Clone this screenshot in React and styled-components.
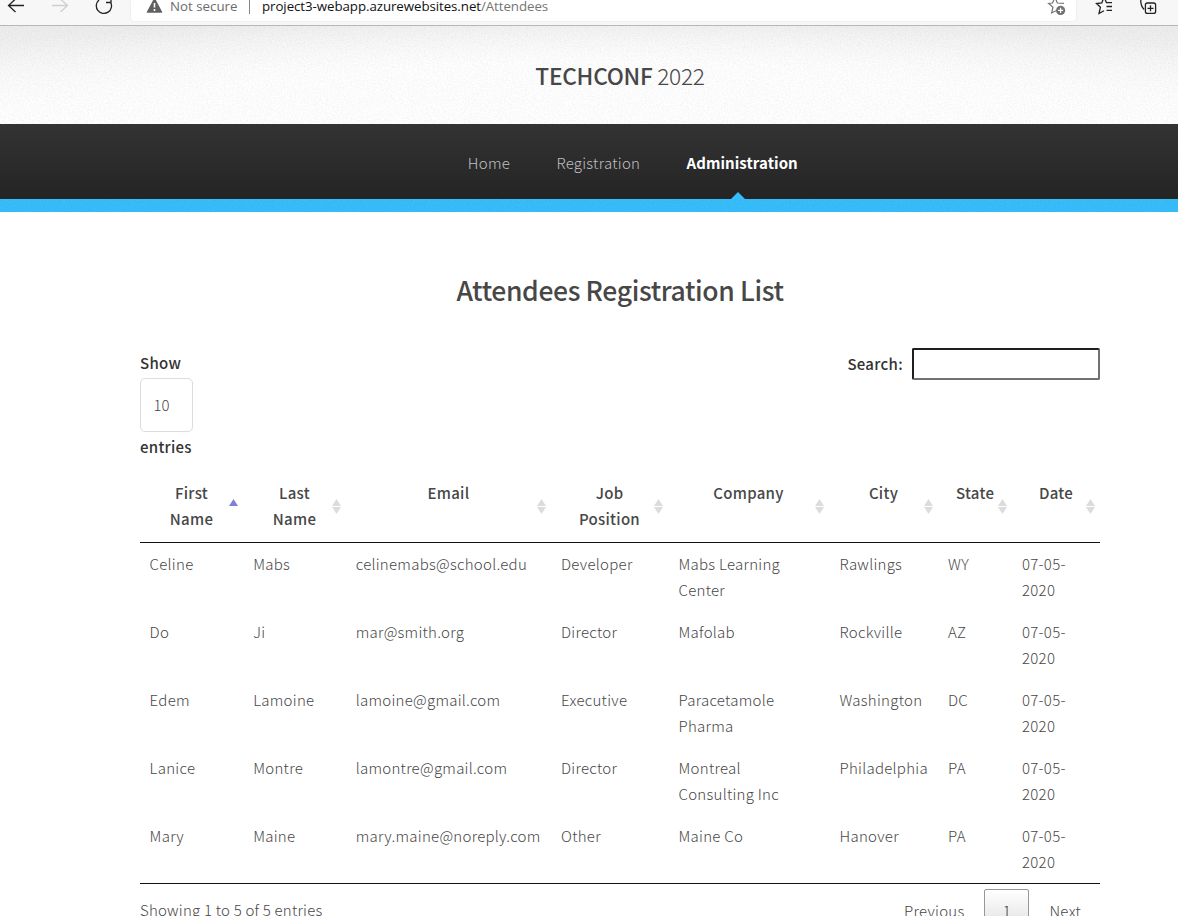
import React from "react";
import styled, { createGlobalStyle, css } from "styled-components";

const Global = createGlobalStyle`
  * { box-sizing: border-box; }
  html, body { margin: 0; height: 916px; overflow: hidden; }
  body {
    background: #fff;
    color: #474747;
    font-family: "Noto Sans CJK SC", "Noto Sans", sans-serif;
    font-weight: 300;
    font-size: 15px;
    line-height: 26px;
    letter-spacing: 0.27px;
  }
`;

const Page = styled.div`
  height: 916px;
  overflow: hidden;
`;

const BrowserBar = styled.div`
  display: flex;
  height: 26px;
  background: #f7f7f7;
  border-bottom: 1px solid #b6b8b7;
  overflow: hidden;
  font-family: "Open Sans", "Noto Sans", sans-serif;
  font-weight: 400;
  font-size: 13.3px;
  line-height: 20px;
  letter-spacing: 0;
`;

const BarIcons = styled.div`
  width: ${(p) => p.$width}px;
  flex: none;
  svg { display: block; }
`;

const AddressBar = styled.div`
  display: flex;
  width: 945px;
  height: 21px;
  background: #fff;
  border-radius: 0 0 4px 4px;
  box-shadow: 0 0 3px rgba(0, 0, 0, 0.08);
  padding-left: 15px;
`;

const Security = styled.span`
  width: 79px;
  margin: -4px 0 0 7px;
  height: 20px;
  color: #6b6b6b;
  white-space: nowrap;
`;

const Divider = styled.span`
  width: 1px;
  height: 14px;
  background: #858585;
`;

const Url = styled.span`
  flex: 1;
  margin: -4px 0 0 12px;
  color: #111;
  letter-spacing: -0.065px;
  white-space: nowrap;
  em { font-style: normal; color: #757575; }
`;

const Header = styled.header`
  position: relative;
  height: 98px;
  background:
    radial-gradient(ellipse 840px 112px at 50% 100%, #fff 55%, rgba(255, 255, 255, 0) 100%),
    linear-gradient(#ededed, #fff 85%);
  padding: 33px 0 0 62px;
  text-align: center;
`;

const Grain = styled.svg`
  position: absolute;
  inset: 0;
  width: 100%;
  height: 100%;
  opacity: ${(p) => p.$strength};
`;

const Logo = styled.h1`
  position: relative;
  margin: 0;
  font-size: 22.7px;
  line-height: 34px;
  font-weight: 300;
  letter-spacing: -0.28px;
  white-space: nowrap;
  strong { font-weight: 500; }
`;

const Nav = styled.nav`
  height: 75px;
  display: flex;
  justify-content: center;
  gap: 46.3px;
  padding: 26px 0 0 87.6px;
  background: linear-gradient(#333, #242424);
`;

const NavLink = styled.a`
  position: relative;
  height: 49px;
  color: #c0c0c0;
  white-space: nowrap;
  ${(p) => p.$active && css`
    color: #fff;
    font-weight: 700;
    letter-spacing: 0.06px;
    &::after {
      content: "";
      position: absolute;
      left: 50%;
      bottom: 0;
      margin-left: -11.5px;
      border: 7px solid transparent;
      border-top: 0;
      border-bottom-color: #37bdfb;
    }
  `}
`;

const BlueStrip = styled.div`
  position: relative;
  height: 13px;
  background: #38befc;
`;

const Main = styled.main`
  width: 960px;
  margin-left: 140px;
  padding-top: 58px;
`;

const Title = styled.h2`
  margin: 0;
  text-align: center;
  font-size: 26.5px;
  line-height: 40px;
  font-weight: 500;
  letter-spacing: -0.37px;
`;

const Controls = styled.div`
  display: flex;
  justify-content: space-between;
  height: 161px;
  padding-top: 38px;
  color: #333;
  font-weight: 500;
`;

const LengthLabel = styled.label`
  display: flex;
  flex-direction: column;
  padding-top: 2px;
`;

const LengthSelect = styled.div`
  width: 53px;
  height: 54px;
  margin: 2px 0 2px;
  padding: 13px 0 0 12.5px;
  border: 1px solid #dcdcdc;
  border-radius: 5px;
  font-weight: 300;
  letter-spacing: 0;
  color: #474747;
`;

const SearchLabel = styled.label`
  display: flex;
  gap: 9px;
  height: 32px;
  line-height: 32px;
  letter-spacing: 0.3px;
`;

const SearchInput = styled.input`
  width: 188px;
  height: 32px;
  border: 2px solid;
  border-color: #1f1f1f #717171 #717171 #1f1f1f;
  border-radius: 2px;
  background: #fff;
`;

const Table = styled.table`
  width: 960px;
  table-layout: fixed;
  border-collapse: separate;
  border-spacing: 0;
  border-bottom: 1px solid #111;
`;

const HeadCell = styled.th`
  position: relative;
  height: 72px;
  padding: 9px 18px 10px;
  vertical-align: top;
  text-align: center;
  font-weight: 500;
  border-bottom: 1px solid #111;
  svg { position: absolute; right: 5px; top: 28px; }
`;

const Cell = styled.td`
  height: 68px;
  padding: 8px 9px 8px ${(p) => p.$indent}px;
  vertical-align: top;
`;

const Footer = styled.div`
  display: flex;
  padding-top: 5px;
  white-space: nowrap;
`;

const Info = styled.div`
  flex: 1;
  padding-top: 8px;
  letter-spacing: 0.22px;
`;

const PageButton = styled.a`
  padding: 9px 19px 9px 20px;
  ${(p) => p.$current && css`
    width: 45px;
    height: 46px;
    margin-left: 1px;
    text-align: center;
    color: #333;
    border: 1px solid #979797;
    border-radius: 2px;
    background: linear-gradient(#fff, #dcdcdc);
    padding: 8px 0;
  `}
`;

const columns = [
  ["First Name", 103, 9.6], ["Last Name", 103, 10.2], ["Email", 205, 9.7], ["Job Position", 117, 10],
  ["Company", 161, 10.5], ["City", 109, 10.5], ["State", 74, 10], ["Date", 88, 10],
];

const rows = [
  ["Celine", "Mabs", "celinemabs@school.edu", "Developer", "Mabs Learning Center", "Rawlings", "WY"],
  ["Do", "Ji", "mar@smith.org", "Director", "Mafolab", "Rockville", "AZ"],
  ["Edem", "Lamoine", "lamoine@gmail.com", "Executive", "Paracetamole Pharma", "Washington", "DC"],
  ["Lanice", "Montre", "lamontre@gmail.com", "Director", "Montreal Consulting Inc", "Philadelphia", "PA"],
  ["Mary", "Maine", "mary.maine@noreply.com", "Other", "Maine Co", "Hanover", "PA"],
];

const SortIcon = ({ active }) => (
  <svg width="9" height="15" viewBox="0 0 9 15">
    <path d="M4.5 0 L9 7 H0 Z" fill={active ? "#8080d5" : "#dcdcdc"} />
    {!active && <path d="M0 8 H9 L4.5 15 Z" fill="#dcdcdc" />}
  </svg>
);

const Texture = ({ id, strength }) => (
  <Grain $strength={strength} aria-hidden="true">
    <filter id={id}>
      <feTurbulence type="fractalNoise" baseFrequency="0.7" numOctaves="2" seed="4" />
      <feColorMatrix type="matrix" values="0 0 0 0 0  0 0 0 0 0  0 0 0 0 0  1.5 0 0 0 -0.5" />
    </filter>
    <rect width="100%" height="100%" filter={`url(#${id})`} />
  </Grain>
);

export default function App() {
  return (
    <Page>
      <Global />
      <BrowserBar>
        <BarIcons $width={131}>
          <svg width="131" height="25" fill="none" stroke="#222" strokeWidth="1.3">
            <path d="M24 5.5 H9 M15.5 -1 L8.5 5.5 L15.5 12" />
            <path d="M52 5.5 H67 M60.5 -1 L67.5 5.5 L60.5 12" stroke="#cfcfcf" />
            <path d="M99 0 A7.6 7.6 0 1 0 110.5 2 M106 2.5 H111 V-3" />
          </svg>
        </BarIcons>
        <AddressBar>
          <svg width="17" height="14" viewBox="0 0 17 14">
            <path d="M8.5 -2.5 L16.2 12 Q16.4 12.8 15.6 12.8 H1.4 Q0.6 12.8 0.8 12 Z" fill="#606060" />
            <path d="M8.5 3 V7.5 M8.5 9 V11" stroke="#fff" strokeWidth="1.6" />
          </svg>
          <Security>Not secure</Security>
          <Divider />
          <Url>project3-webapp.azurewebsites.net<em>/Attendees</em></Url>
          <svg width="29" height="20" fill="none" stroke="#777" strokeWidth="1.2">
            <path d="M8 -3 L10.3 3 L17 3.4 M8 -3 L5.6 3 L1.6 3.4 L6 7.2 L4.6 13 L9 10.8" />
            <circle cx="13.6" cy="10.4" r="4.6" fill="#717171" stroke="none" />
            <path d="M11 10.4 H16.2 M13.6 7.8 V13" stroke="#fff" />
          </svg>
        </AddressBar>
        <BarIcons $width={102}>
          <svg width="102" height="25" fill="none" stroke="#222" strokeWidth="1.3">
            <path d="M28 -3 L25.8 3 L20.5 3.5 L24.4 7.3 L23 13.5 L28 10.8 M28 -3 L30.5 2.7 M30 2.7 H36 M30.5 6.5 H36 M30.5 10.3 H36" />
            <path d="M64.8 -2 Q64.2 6 68.2 9.6" />
            <rect x="69.4" y="3" width="10.2" height="10.4" rx="2" />
            <path d="M74.5 5.3 V11.3 M71.5 8.3 H77.5" />
          </svg>
        </BarIcons>
      </BrowserBar>
      <Header>
        <Texture id="paper" strength={0.06} />
        <Logo><strong>TECHCONF</strong> 2022</Logo>
      </Header>
      <Nav>
        <NavLink>Home</NavLink>
        <NavLink>Registration</NavLink>
        <NavLink $active>Administration</NavLink>
      </Nav>
      <BlueStrip><Texture id="strip" strength={0.06} /></BlueStrip>
      <Main>
        <Title>Attendees Registration List</Title>
        <Controls>
          <LengthLabel>Show<LengthSelect>10</LengthSelect>entries</LengthLabel>
          <SearchLabel>Search:<SearchInput /></SearchLabel>
        </Controls>
        <Table>
          <colgroup>{columns.map(([n, w]) => <col key={n} width={w} />)}</colgroup>
          <thead>
            <tr>{columns.map(([n], i) => <HeadCell key={n}>{n}<SortIcon active={i === 0} /></HeadCell>)}</tr>
          </thead>
          <tbody>
            {rows.map((r) => (
              <tr key={r[0]}>
                {[...r, "07-05-2020"].map((c, i) => <Cell key={i} $indent={columns[i][2]}>{c}</Cell>)}
              </tr>
            ))}
          </tbody>
        </Table>
        <Footer>
          <Info>Showing 1 to 5 of 5 entries</Info>
          <PageButton>Previous</PageButton>
          <PageButton $current>1</PageButton>
          <PageButton>Next</PageButton>
        </Footer>
      </Main>
    </Page>
  );
}
